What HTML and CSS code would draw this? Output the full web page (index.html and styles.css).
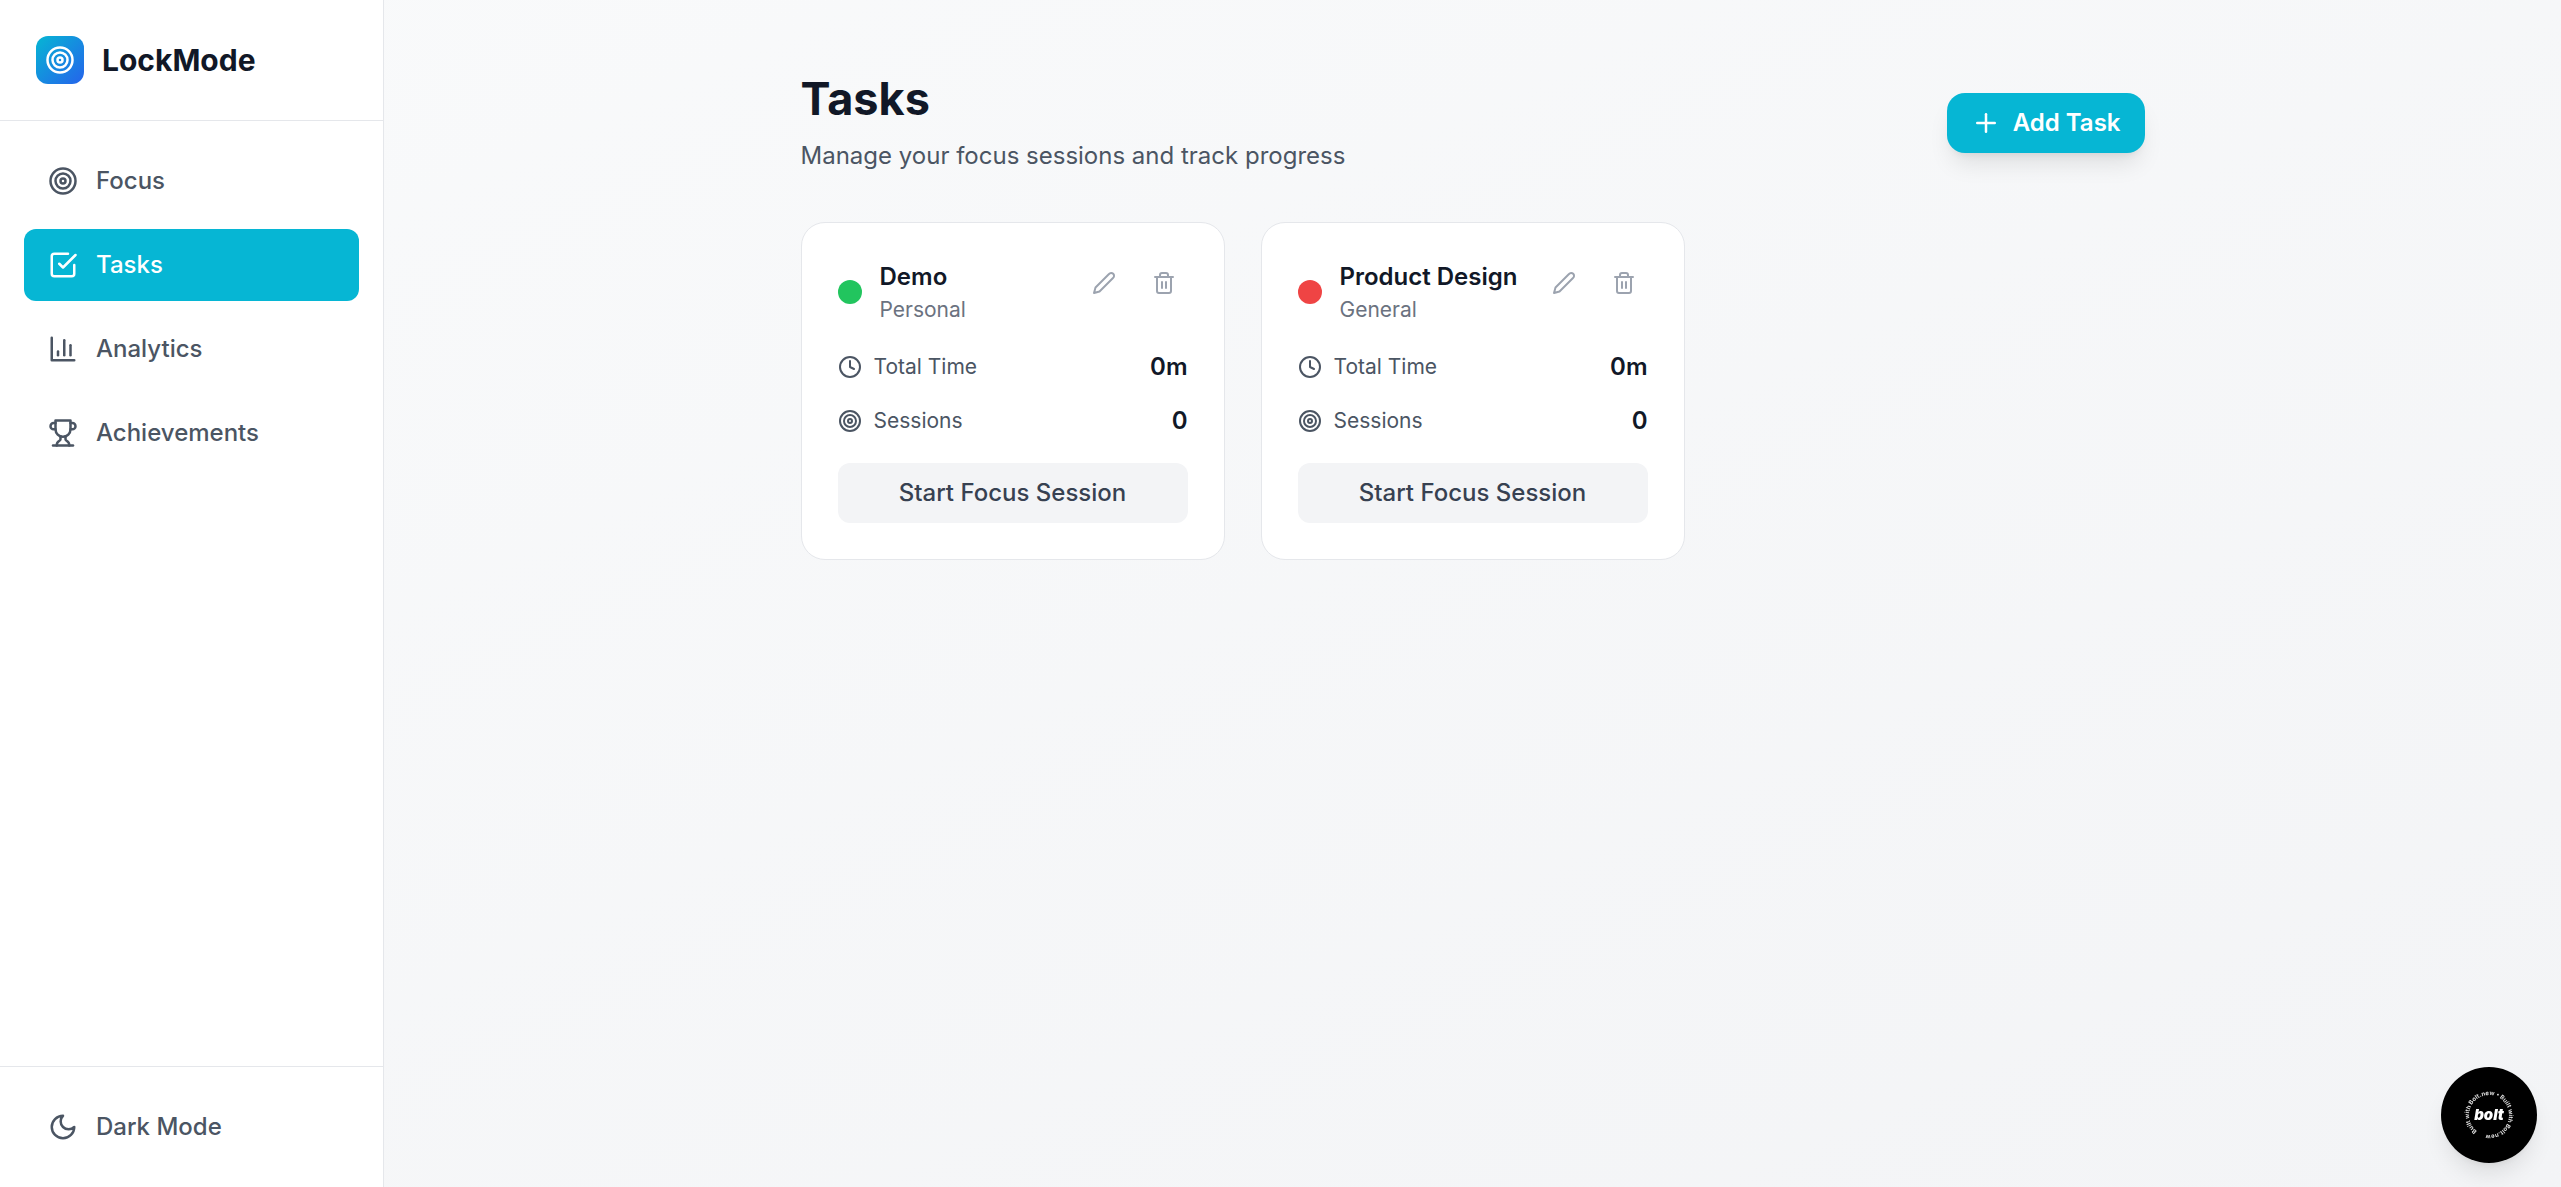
FILE: index.html
```html
<!DOCTYPE html>
<html lang="en">
<head>
<meta charset="utf-8">
<meta name="viewport" content="width=device-width, initial-scale=1">
<title>LockMode – Tasks</title>
<link rel="stylesheet" href="styles.css">
</head>
<body>
<svg class="sprite" aria-hidden="true">
  <symbol id="target" viewBox="0 0 24 24"><circle cx="12" cy="12" r="10"/><circle cx="12" cy="12" r="6"/><circle cx="12" cy="12" r="2"/></symbol>
  <symbol id="check-square" viewBox="0 0 24 24"><path d="m9 11 3 3L22 4"/><path d="M21 12v7a2 2 0 0 1-2 2H5a2 2 0 0 1-2-2V5a2 2 0 0 1 2-2h11"/></symbol>
  <symbol id="bar-chart" viewBox="0 0 24 24"><path d="M3 3v18h18"/><path d="M18 17V9"/><path d="M13 17V5"/><path d="M8 17v-3"/></symbol>
  <symbol id="trophy" viewBox="0 0 24 24"><path d="M6 9H4.500a2.500 2.500 0 0 1 0-5H6"/><path d="M18 9h1.500a2.500 2.500 0 0 0 0-5H18"/><path d="M4 22h16"/><path d="M10 14.660V17c0 .55-.47.98-.97 1.210C7.850 18.750 7 20.240 7 22"/><path d="M14 14.660V17c0 .55.47.98.97 1.210C16.150 18.750 17 20.240 17 22"/><path d="M18 2H6v7a6 6 0 0 0 12 0V2Z"/></symbol>
  <symbol id="moon" viewBox="0 0 24 24"><path d="M12 3a6 6 0 0 0 9 9 9 9 0 1 1-9-9Z"/></symbol>
  <symbol id="plus" viewBox="0 0 24 24"><path d="M5 12h14"/><path d="M12 5v14"/></symbol>
  <symbol id="pencil" viewBox="0 0 24 24"><path d="M17 3a2.850 2.830 0 1 1 4 4L7.500 20.500 2 22l1.500-5.500Z"/></symbol>
  <symbol id="trash" viewBox="0 0 24 24"><path d="M3 6h18"/><path d="M19 6v14c0 1-1 2-2 2H7c-1 0-2-1-2-2V6"/><path d="M8 6V4c0-1 1-2 2-2h4c1 0 2 1 2 2v2"/><path d="M10 11v6"/><path d="M14 11v6"/></symbol>
  <symbol id="clock" viewBox="0 0 24 24"><circle cx="12" cy="12" r="10"/><path d="M12 6v6l4 2"/></symbol>
</svg>

<div class="app">
  <aside class="sidebar">
    <div class="brand">
      <span class="brand-mark"><svg class="icon"><use href="#target"/></svg></span>
      <span class="brand-name">LockMode</span>
    </div>
    <nav class="nav" aria-label="Main">
      <button class="nav-item" type="button"><svg class="icon"><use href="#target"/></svg>Focus</button>
      <button class="nav-item nav-item-active" type="button" aria-current="page"><svg class="icon"><use href="#check-square"/></svg>Tasks</button>
      <button class="nav-item" type="button"><svg class="icon"><use href="#bar-chart"/></svg>Analytics</button>
      <button class="nav-item" type="button"><svg class="icon"><use href="#trophy"/></svg>Achievements</button>
    </nav>
    <div class="sidebar-footer">
      <button class="nav-item" type="button"><svg class="icon"><use href="#moon"/></svg>Dark Mode</button>
    </div>
  </aside>

  <main class="main">
    <div class="content">
      <header class="page-header">
        <div>
          <h1 class="page-title">Tasks</h1>
          <p class="page-subtitle">Manage your focus sessions and track progress</p>
        </div>
        <button class="add-button" type="button"><svg class="icon"><use href="#plus"/></svg>Add Task</button>
      </header>

      <div class="task-grid">
        <article class="card">
          <div class="card-header">
            <div class="card-heading">
              <span class="dot dot-green"></span>
              <div>
                <h2 class="card-title">Demo</h2>
                <p class="card-category">Personal</p>
              </div>
            </div>
            <div class="card-actions">
              <button class="icon-button" type="button" aria-label="Edit Demo"><svg class="icon icon-small"><use href="#pencil"/></svg></button>
              <button class="icon-button" type="button" aria-label="Delete Demo"><svg class="icon icon-small"><use href="#trash"/></svg></button>
            </div>
          </div>
          <dl class="stats">
            <div class="stat">
              <dt class="stat-label"><svg class="icon icon-small"><use href="#clock"/></svg>Total Time</dt>
              <dd class="stat-value">0m</dd>
            </div>
            <div class="stat">
              <dt class="stat-label"><svg class="icon icon-small"><use href="#target"/></svg>Sessions</dt>
              <dd class="stat-value">0</dd>
            </div>
          </dl>
          <button class="start-button" type="button">Start Focus Session</button>
        </article>

        <article class="card">
          <div class="card-header">
            <div class="card-heading">
              <span class="dot dot-red"></span>
              <div>
                <h2 class="card-title">Product Design</h2>
                <p class="card-category">General</p>
              </div>
            </div>
            <div class="card-actions">
              <button class="icon-button" type="button" aria-label="Edit Product Design"><svg class="icon icon-small"><use href="#pencil"/></svg></button>
              <button class="icon-button" type="button" aria-label="Delete Product Design"><svg class="icon icon-small"><use href="#trash"/></svg></button>
            </div>
          </div>
          <dl class="stats">
            <div class="stat">
              <dt class="stat-label"><svg class="icon icon-small"><use href="#clock"/></svg>Total Time</dt>
              <dd class="stat-value">0m</dd>
            </div>
            <div class="stat">
              <dt class="stat-label"><svg class="icon icon-small"><use href="#target"/></svg>Sessions</dt>
              <dd class="stat-value">0</dd>
            </div>
          </dl>
          <button class="start-button" type="button">Start Focus Session</button>
        </article>
      </div>
    </div>
  </main>
</div>

<a class="badge" href="https://bolt.new" aria-label="Built with Bolt.new">
  <svg class="badge-art" viewBox="0 0 96 96">
    <path id="ring" fill="none" d="M36 64A20 20 0 0 1 60 32A20 20 0 0 1 36 64"/>
    <text class="badge-ring"><textPath href="#ring">Built with Bolt.new • Built with Bolt.new</textPath></text>
    <text class="badge-name" x="48" y="53" text-anchor="middle">bolt</text>
  </svg>
</a>
</body>
</html>
```
FILE: styles.css
```css
*,
*::before,
*::after {
  box-sizing: border-box;
}

body {
  margin: 0;
  font-family: Inter, "Liberation Sans", sans-serif;
  font-size: 24px;
  line-height: 36px;
  color: #111827;
}

h1, h2, p, dl, dd {
  margin: 0;
}

button {
  border: 0;
  padding: 0;
  background: none;
  color: inherit;
  font: inherit;
  cursor: pointer;
}

.sprite {
  display: none;
}

.icon {
  flex: none;
  display: block;
  width: 30px;
  height: 30px;
  fill: none;
  stroke: currentColor;
  stroke-width: 2;
  stroke-linecap: round;
  stroke-linejoin: round;
}

.icon-small {
  width: 24px;
  height: 24px;
}

.app {
  display: flex;
  min-height: 100vh;
  background: linear-gradient(to bottom right, #f9fafb, #f3f4f6);
}

/* Sidebar */
.sidebar {
  flex: none;
  display: flex;
  flex-direction: column;
  width: 384px;
  background: #fff;
  border-right: 1px solid #e5e7eb;
}

.brand {
  display: flex;
  align-items: center;
  gap: 18px;
  padding: 36px;
  border-bottom: 1px solid #e5e7eb;
}

.brand-mark {
  display: grid;
  place-items: center;
  width: 48px;
  height: 48px;
  border-radius: 12px;
  background: linear-gradient(to bottom right, #06b6d4, #2563eb);
  color: #fff;
}

.brand-name {
  font-size: 30px;
  line-height: 42px;
  font-weight: 700;
}

.nav {
  flex: 1;
  display: flex;
  flex-direction: column;
  gap: 12px;
  padding: 24px;
}

.nav-item {
  display: flex;
  align-items: center;
  gap: 18px;
  width: 100%;
  padding: 18px 24px;
  border-radius: 12px;
  color: #4b5563;
  font-weight: 500;
  text-align: left;
}

.nav-item-active {
  background: #06b6d4;
  color: #fff;
}

.sidebar-footer {
  padding: 24px;
  border-top: 1px solid #e5e7eb;
}

/* Page */
.main {
  flex: 1;
  min-width: 0;
  padding: 72px 48px;
}

.content {
  max-width: 1344px;
  margin: 0 auto;
}

.page-header {
  display: flex;
  align-items: center;
  justify-content: space-between;
  margin-bottom: 48px;
}

.page-title {
  margin-bottom: 12px;
  font-size: 45px;
  line-height: 54px;
  font-weight: 700;
}

.page-subtitle {
  color: #4b5563;
}

.add-button {
  display: flex;
  align-items: center;
  gap: 12px;
  padding: 12px 24px;
  border-radius: 18px;
  background: #06b6d4;
  color: #fff;
  font-weight: 600;
  box-shadow: 0 15px 23px -5px rgba(0, 0, 0, 0.1), 0 6px 9px -6px rgba(0, 0, 0, 0.1);
}

.task-grid {
  display: grid;
  grid-template-columns: repeat(3, minmax(0, 1fr));
  gap: 36px;
}

/* Task card */
.card {
  padding: 36px;
  border: 1px solid #e5e7eb;
  border-radius: 24px;
  background: #fff;
}

.card-header {
  display: flex;
  align-items: flex-start;
  justify-content: space-between;
  margin-bottom: 24px;
}

.card-heading {
  display: flex;
  align-items: center;
  gap: 18px;
}

.dot {
  flex: none;
  width: 24px;
  height: 24px;
  border-radius: 50%;
}

.dot-green {
  background: #22c55e;
}

.dot-red {
  background: #ef4444;
}

.card-title {
  font-size: 24px;
  line-height: 36px;
  font-weight: 600;
}

.card-category {
  font-size: 21px;
  line-height: 30px;
  color: #6b7280;
}

.card-actions {
  display: flex;
  gap: 12px;
}

.icon-button {
  padding: 12px;
  border-radius: 12px;
  color: #9ca3af;
}

.stats {
  display: flex;
  flex-direction: column;
  gap: 18px;
  margin-bottom: 24px;
}

.stat {
  display: flex;
  align-items: center;
  justify-content: space-between;
}

.stat-label {
  display: flex;
  align-items: center;
  gap: 12px;
  font-size: 21px;
  line-height: 30px;
  color: #4b5563;
}

.stat-value {
  font-weight: 600;
}

.start-button {
  display: block;
  width: 100%;
  padding: 12px 24px;
  border-radius: 12px;
  background: #f3f4f6;
  color: #374151;
  font-weight: 500;
}

/* Floating badge */
.badge {
  position: fixed;
  right: 24px;
  bottom: 24px;
  width: 96px;
  height: 96px;
  border-radius: 50%;
  background: #000;
  box-shadow: 0 15px 23px -5px rgba(0, 0, 0, 0.1), 0 6px 9px -6px rgba(0, 0, 0, 0.1);
}

.badge-art {
  display: block;
  width: 100%;
  height: 100%;
}

.badge-ring {
  fill: #ddd;
  font-size: 6px;
  font-weight: 700;
}

.badge-name {
  fill: #fff;
  font-size: 15px;
  font-style: italic;
  font-weight: 900;
}
```
